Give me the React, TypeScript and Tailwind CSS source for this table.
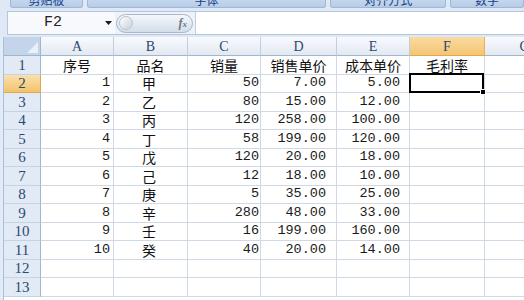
import React from 'react';

// ── 表格数据 ──
const header = ['序号', '品名', '销量', '销售单价', '成本单价', '毛利率'];
const data: [number, string, number, string, string][] = [
  [1, '甲', 50, '7.00', '5.00'],
  [2, '乙', 80, '15.00', '12.00'],
  [3, '丙', 120, '258.00', '100.00'],
  [4, '丁', 58, '199.00', '120.00'],
  [5, '戊', 120, '20.00', '18.00'],
  [6, '己', 12, '18.00', '10.00'],
  [7, '庚', 5, '35.00', '25.00'],
  [8, '辛', 280, '48.00', '33.00'],
  [9, '壬', 16, '199.00', '160.00'],
  [10, '癸', 40, '20.00', '14.00'],
];

const cjk = "font-['Noto_Sans_CJK_SC',sans-serif]";
const mono = "font-['Liberation_Mono',monospace]";
const serif = "font-['Liberation_Serif',serif]";

// 列宽: A..G
const colW = ['w-[73px]', 'w-[74px]', 'w-[73px]', 'w-[76px]', 'w-[73px]', 'w-[75px]', 'w-[80px]'];
const letters = ['A', 'B', 'C', 'D', 'E', 'F', 'G'];
const cell = 'flex-none h-full border-r border-b border-[#d0d7e5] bg-white overflow-hidden';

function RibbonTab({ label, className }: { label: string; className: string }) {
  return (
    <div
      className={`h-[8px] overflow-hidden border-x border-b border-[#9fb6d4] rounded-b-[3px] bg-linear-to-b from-[#c4d6ee] to-[#b8cce6] flex justify-center ${className}`}
    >
      <span className={`${cjk} text-[12px] leading-[12px] -mt-[6px] text-[#15428b]`}>{label}</span>
    </div>
  );
}

function RowHead({ n, active }: { n: number; active?: boolean }) {
  return (
    <div
      className={`flex-none w-[37px] h-full flex items-center justify-center border-r border-b ${serif} text-[15px] text-[#2c4870] ${
        active
          ? 'bg-linear-to-b from-[#fbe0ab] to-[#f2c36b] border-[#e0a94c]'
          : 'bg-[#e2eaf6] border-r-[#9eb6ce] border-b-[#c5d3e6]'
      }`}
    >
      {n}
    </div>
  );
}

export default function App() {
  return (
    <div className="w-[524px] h-[300px] overflow-hidden bg-[#dfe8f5] flex flex-col">
      {/* ── 功能区分组标签 ── */}
      <div className="flex-none h-[8px] flex gap-[4px] pl-[10px]">
        <RibbonTab label="剪贴板" className="w-[73px]" />
        <RibbonTab label="字体" className="w-[240px]" />
        <RibbonTab label="对齐方式" className="w-[116px]" />
        <RibbonTab label="数字" className="w-[74px]" />
      </div>
      <div className="flex-none h-[3px]" />

      {/* ── 编辑栏 ── */}
      <div className="flex-none h-[24px] ml-[7px] flex border-t border-b border-[#b4c5dc] border-l">
        <div className="flex-none w-[107px] bg-[#f7f9fc] flex items-center relative">
          <span className={`${mono} text-[15px] text-[#222] ml-[36px]`}>F2</span>
          <svg className="absolute left-[97px] top-[9px]" width="7" height="4" viewBox="0 0 7 4">
            <polygon points="0,0 7,0 3.5,4" fill="#1a1a1a" />
          </svg>
        </div>
        <div className="flex-none w-[80px] bg-[#eef3f9] flex items-center pl-[1px]">
          <div className="relative w-[77px] h-[19px] rounded-full border border-[#a7b7cc] bg-linear-to-b from-[#f5f8fc] to-[#d3dde9] flex items-center">
            <div className="ml-[2px] w-[14px] h-[14px] rounded-full border border-[#b9c4d2] bg-linear-to-br from-[#ffffff] to-[#c9d1dc]" />
            <span className={`ml-auto mr-[5px] ${serif} italic font-bold text-[12px] text-[#6a7585]`}>
              f<span className="text-[9px]">x</span>
            </span>
          </div>
        </div>
        <div className="flex-1 bg-white border-l border-[#c3cfde]" />
      </div>
      <div className="flex-none h-[2px]" />

      {/* ── 工作表 ── */}
      <div className="flex-1 flex bg-white">
        <div className="flex-none w-[4px] bg-[#e3ebf6] border-r border-[#a9bfdc]" />
        <div className="flex-1 flex flex-col overflow-hidden">
          {/* 列标题 */}
          <div className="flex-none h-[19px] flex">
            <div className="flex-none w-[37px] h-full border-r border-b border-[#9eb6ce] bg-[#c3d4eb] relative">
              <svg className="absolute right-[2px] bottom-[2px]" width="11" height="11" viewBox="0 0 11 11">
                <polygon points="11,0 11,11 0,11" fill="#eaf0f8" />
              </svg>
            </div>
            {letters.map((l, i) => (
              <div
                key={l}
                className={`flex-none ${colW[i]} h-full flex items-center justify-center border-r border-b ${serif} text-[14px] text-[#2c4870] ${
                  l === 'F'
                    ? 'bg-linear-to-b from-[#fbdba0] to-[#f4c574] border-r-[#e4b25c] border-b-[#e0a94c]'
                    : 'bg-linear-to-b from-[#f8fafd] to-[#e3e9f2] border-r-[#c0cedf] border-b-[#9eb6ce]'
                }`}
              >
                {l}
              </div>
            ))}
          </div>

          {/* 第1行: 表头 */}
          <div className="flex-none h-[19px] flex">
            <RowHead n={1} />
            {header.map((h, i) => (
              <div key={h} className={`${cell} ${colW[i]} flex items-end justify-center ${cjk} text-[14px] leading-[17px] text-[#111]`}>
                {h}
              </div>
            ))}
            <div className={`${cell} ${colW[6]}`} />
          </div>

          {/* 数据行 */}
          {data.map((r, idx) => {
            const n = idx + 2;
            const active = n === 2;
            return (
              <div key={n} className={`flex-none flex ${idx % 2 === 0 ? 'h-[18px]' : 'h-[19px]'}`}>
                <RowHead n={n} active={active} />
                <div className={`${cell} ${colW[0]} flex items-center justify-end pr-[3px] ${mono} text-[13.5px] text-[#1a1a1a]`}>{r[0]}</div>
                <div className={`${cell} ${colW[1]} flex items-end justify-center pr-[3px] ${cjk} text-[14px] leading-[17px] text-[#111]`}>{r[1]}</div>
                <div className={`${cell} ${colW[2]} flex items-center justify-end pr-[1px] ${mono} text-[13.5px] text-[#1a1a1a]`}>{r[2]}</div>
                <div className={`${cell} ${colW[3]} flex items-center justify-end pr-[10px] ${mono} text-[13.5px] text-[#1a1a1a]`}>{r[3]}</div>
                <div className={`${cell} ${colW[4]} flex items-center justify-end pr-[9px] ${mono} text-[13.5px] text-[#1a1a1a]`}>{r[4]}</div>
                <div className={`${cell} ${colW[5]} ${active ? 'relative overflow-visible' : ''}`}>
                  {active && (
                    <div className="absolute -left-[1px] -top-[2px] w-[75px] h-[20px] border-2 border-black z-10">
                      <div className="absolute -right-[4px] -bottom-[4px] w-[6px] h-[6px] bg-black border border-white" />
                    </div>
                  )}
                </div>
                <div className={`${cell} ${colW[6]}`} />
              </div>
            );
          })}

          {/* 空行 */}
          {[12, 13].map((n) => (
            <div key={n} className={`flex-none flex ${n === 12 ? 'h-[18px]' : 'h-[19px]'}`}>
              <RowHead n={n} />
              {colW.map((w, i) => (
                <div key={i} className={`${cell} ${w}`} />
              ))}
            </div>
          ))}
        </div>
      </div>
    </div>
  );
}
